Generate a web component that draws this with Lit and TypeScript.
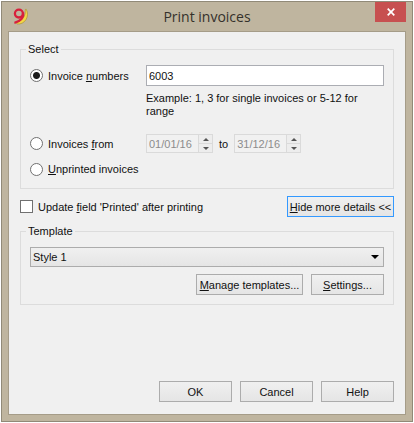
import { LitElement, html, css, svg } from "lit";
import { customElement, property } from "lit/decorators.js";

@customElement("date-spinner")
export class DateSpinner extends LitElement {
  static styles = css`
    :host {
      display: block;
    }
    .box {
      box-sizing: border-box;
      display: flex;
      width: 67px;
      height: 19px;
      border: 1px solid #dadada;
      background: #f1f1f1;
    }
    .value {
      flex: 1;
      min-width: 0;
      box-sizing: border-box;
      border: 0;
      margin: 0;
      padding: 0 0 0 2px;
      background: transparent;
      color: #8c8c8c;
      font: inherit;
    }
    .steps {
      display: flex;
      flex-direction: column;
      width: 13px;
      gap: 1px;
      background: #dadada;
      border-left: 1px solid #dadada;
    }
    .step {
      flex: 1;
      display: flex;
      align-items: center;
      justify-content: center;
      min-height: 0;
      border: 0;
      margin: 0;
      padding: 0;
      background: #ededed;
    }
  `;

  @property() value = "";
  @property() label = "";

  render() {
    return html`
      <div class="box">
        <input class="value" type="text" aria-label=${this.label} .value=${this.value} disabled />
        <div class="steps">
          <button class="step" type="button" aria-label="Later" disabled>
            <svg width="6" height="3" viewBox="0 0 6 3"><path d="M0 3L3 0L6 3Z" fill="#555" /></svg>
          </button>
          <button class="step" type="button" aria-label="Earlier" disabled>
            <svg width="6" height="3" viewBox="0 0 6 3"><path d="M0 0L3 3L6 0Z" fill="#555" /></svg>
          </button>
        </div>
      </div>
    `;
  }
}

const logo = svg`
  <path d="M14.2 1.2C16 4.4 16 8.4 14 11.6C12 14.8 8.8 16.4 5 16C4.4 15.4 4.8 14.6 5.6 14.2C9.4 12.4 12.6 9.6 13.2 5.4C13.4 3.6 13 2.4 13.4 1.4Z" fill="#f3d648" stroke="#a58d2c" stroke-width=".6" />
  <ellipse cx="6.9" cy="5.6" rx="4" ry="3.9" fill="none" stroke="#d8203c" stroke-width="2.3" />
  <path d="M11 4.6C12 9.4 8.6 13.6 2.4 14.8" fill="none" stroke="#d8203c" stroke-width="2.3" />
`;

@customElement("app-root")
export class AppRoot extends LitElement {
  static styles = css`
    :host {
      display: block;
      font: 11px/14px "Liberation Sans", Arial, sans-serif;
      color: #111;
    }
    .page {
      box-sizing: border-box;
      min-height: 100vh;
      padding: 1px;
      display: flex;
      background: #fff;
    }
    .window {
      flex: 1;
      min-width: 0;
      box-sizing: border-box;
      display: flex;
      flex-direction: column;
      padding: 0 6px 6px;
      border: 1px solid #918a78;
      background: #bfb59f;
    }
    .titlebar {
      display: grid;
      grid-template-columns: 1fr auto 1fr;
      height: 29px;
    }
    .logo {
      margin: 6px 0 0 4px;
    }
    .title {
      margin: 0;
      font: 14px/29px "Open Sans", "Noto Sans", sans-serif;
      color: #34312b;
    }
    .close {
      justify-self: end;
      display: flex;
      align-items: center;
      justify-content: center;
      width: 31px;
      height: 20px;
      border: 0;
      padding: 0;
      background: #c75050;
    }
    .client {
      flex: 1;
      display: flex;
      flex-direction: column;
      padding: 10px 11px 12px;
      border: 1px solid #a59c88;
      background: #f0f0f0;
    }
    .group {
      min-width: 0;
      margin: 0;
      padding: 9px;
      border: 1px solid #dcdcdc;
    }
    .legend {
      margin-left: -4px;
      padding: 0 2px;
    }
    .choices {
      display: grid;
      grid-template-columns: 116px 1fr;
      align-items: center;
    }
    .choice {
      display: flex;
      align-items: center;
      gap: 5px;
    }
    .radio,
    .check {
      appearance: none;
      flex: none;
      box-sizing: border-box;
      width: 13px;
      height: 13px;
      margin: 0;
      border: 1px solid #707070;
      background: #fff;
    }
    .radio {
      border-radius: 50%;
    }
    .radio:checked {
      background: radial-gradient(circle, #1c1c1c 3px, #fff 4px);
    }
    .accel {
      text-decoration: underline;
    }
    .numbers {
      box-sizing: border-box;
      width: 100%;
      height: 21px;
      margin: 0;
      padding: 0 2px;
      border: 1px solid #abadb3;
      background: #fff;
      font: inherit;
      color: inherit;
    }
    .hint {
      grid-column: 2;
      margin: 6px 0 16px;
      line-height: 13px;
      padding-right: 12px;
    }
    .dates {
      display: flex;
      align-items: center;
      gap: 6px;
    }
    .unprinted {
      margin: 9px 0 3px;
      grid-column: 1 / -1;
    }
    .options {
      display: flex;
      align-items: center;
      justify-content: space-between;
      margin: 7px 0;
    }
    .button {
      box-sizing: border-box;
      width: 73px;
      height: 21px;
      border: 1px solid #acacac;
      margin: 0;
      padding: 0;
      background: linear-gradient(#f0f0f0, #e5e5e5);
      font: inherit;
      color: inherit;
      white-space: nowrap;
    }
    .wide {
      width: 107px;
    }
    .focused {
      border-color: #3399ff;
    }
    .picker {
      display: grid;
      align-items: center;
    }
    .select {
      grid-area: 1 / 1;
      appearance: none;
      box-sizing: border-box;
      width: 100%;
      height: 20px;
      margin: 0;
      padding: 0 2px;
      border: 1px solid #acacac;
      border-radius: 0;
      background: linear-gradient(#f0f0f0, #e5e5e5);
      font: inherit;
      color: inherit;
    }
    .arrow {
      grid-area: 1 / 1;
      justify-self: end;
      margin-right: 5px;
      pointer-events: none;
    }
    .actions {
      display: flex;
      justify-content: flex-end;
      gap: 8px;
    }
    .below {
      margin-top: 7px;
    }
    .footer {
      margin-top: auto;
    }
  `;

  render() {
    return html`
      <div class="page">
        <main class="window">
          <header class="titlebar">
            <svg class="logo" width="17" height="17" viewBox="0 0 17 17" aria-hidden="true">${logo}</svg>
            <h1 class="title">Print invoices</h1>
            <button class="close" type="button" aria-label="Close">
              <svg width="8" height="8" viewBox="0 0 8 8"><path d="M.7 .7L7.3 7.3M7.3 .7L.7 7.3" stroke="#fff" stroke-width="1.7" /></svg>
            </button>
          </header>
          <form class="client" @submit=${(e: Event) => e.preventDefault()}>
            <fieldset class="group">
              <legend class="legend">Select</legend>
              <div class="choices">
                <label class="choice">
                  <input class="radio" type="radio" name="which" checked />
                  <span>Invoice <span class="accel">n</span>umbers</span>
                </label>
                <input class="numbers" type="text" aria-label="Invoice numbers" value="6003" />
                <p class="hint">Example: 1, 3 for single invoices or 5-12 for range</p>
                <label class="choice">
                  <input class="radio" type="radio" name="which" />
                  <span>Invoices <span class="accel">f</span>rom</span>
                </label>
                <div class="dates">
                  <date-spinner label="From date" value="01/01/16"></date-spinner>
                  <span>to</span>
                  <date-spinner label="To date" value="31/12/16"></date-spinner>
                </div>
                <label class="choice unprinted">
                  <input class="radio" type="radio" name="which" />
                  <span><span class="accel">U</span>nprinted invoices</span>
                </label>
              </div>
            </fieldset>
            <div class="options">
              <label class="choice">
                <input class="check" type="checkbox" />
                <span>Update <span class="accel">f</span>ield 'Printed' after printing</span>
              </label>
              <button class="button wide focused" type="button"><span class="accel">H</span>ide more details &lt;&lt;</button>
            </div>
            <fieldset class="group">
              <legend class="legend">Template</legend>
              <div class="picker">
                <select class="select" aria-label="Template">
                  <option>Style 1</option>
                </select>
                <svg class="arrow" width="8" height="4" viewBox="0 0 8 4"><path d="M0 0H8L4 4Z" fill="#000" /></svg>
              </div>
              <div class="actions below">
                <button class="button wide" type="button"><span class="accel">M</span>anage templates...</button>
                <button class="button" type="button"><span class="accel">S</span>ettings...</button>
              </div>
            </fieldset>
            <div class="actions footer">
              <button class="button" type="submit">OK</button>
              <button class="button" type="button">Cancel</button>
              <button class="button" type="button">Help</button>
            </div>
          </form>
        </main>
      </div>
    `;
  }
}
